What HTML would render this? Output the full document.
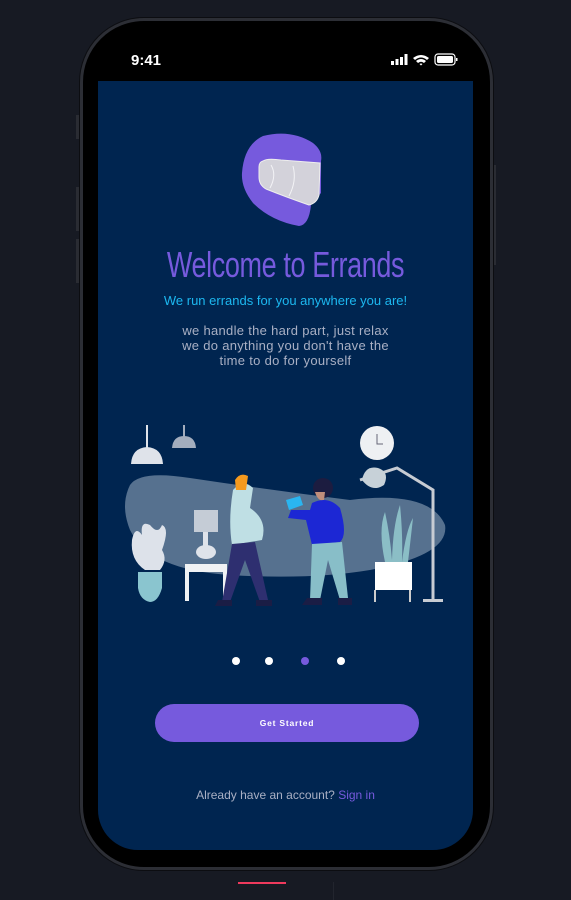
<!DOCTYPE html>
<html><head><meta charset="utf-8"><style>
*{margin:0;padding:0;box-sizing:border-box}
body{width:571px;height:900px;background:#171a23;position:relative;overflow:hidden;font-family:"Liberation Sans",sans-serif}
.phone{position:absolute;left:80px;top:18px;width:413px;height:852px;border-radius:64px;background:#000;border:3px solid #2c2e35;box-shadow:0 0 0 1px #0c0d11}
.inner{position:absolute;left:96px;top:30px;width:380px;height:826px;border-radius:50px;background:#000}
.screen{position:absolute;left:98px;top:81px;width:375px;height:769px;background:#002550;border-radius:0 0 40px 40px;overflow:hidden}
.btn-side{position:absolute;background:#2a2c33;width:3px}
.abs{position:absolute}
</style></head><body>
<div class="btn-side" style="left:76px;top:115px;height:24px"></div>
<div class="btn-side" style="left:76px;top:187px;height:44px"></div>
<div class="btn-side" style="left:76px;top:239px;height:44px"></div>
<div class="btn-side" style="left:493px;top:165px;height:100px"></div>
<div class="phone"></div>
<div class="inner"></div>
<div class="abs" style="left:131px;top:52px;color:#fff;font-size:15px;font-weight:bold">9:41</div>
<svg class="abs" style="left:391px;top:53px" width="68" height="14" viewBox="0 0 68 14">
<rect x="0" y="8" width="3" height="4" fill="#fff"/><rect x="4.5" y="6" width="3" height="6" fill="#fff"/><rect x="9" y="4" width="3" height="8" fill="#fff"/><rect x="13.5" y="1" width="3" height="11" fill="#fff"/>
<path d="M22 5 Q30 -1 38 5 L36 7 Q30 2 24 7Z M25 8 Q30 4 35 8 L33 10 Q30 7.5 27 10Z M28.5 11 L30 12.5 L31.5 11 Q30 10 28.5 11Z" fill="#fff"/>
<rect x="44" y="1" width="20" height="11" rx="3" fill="none" stroke="#fff" stroke-width="1.2"/><rect x="46" y="3" width="16" height="7" rx="1.5" fill="#fff"/><rect x="65" y="5" width="1.5" height="3" fill="#fff"/>
</svg>
<div class="screen">
<svg class="abs" style="left:143px;top:52px" width="82" height="96" viewBox="0 0 82 96">
<path d="M22 3 Q50 -4 72 10 Q82 18 80 28 L80 60 L70 72 Q68 92 58 93 Q30 88 12 70 Q0 55 1 40 Q3 12 22 3Z" fill="#765add"/>
<path d="M22 28 Q26 25 40 27 L79 30 L78 62 Q76 70 68 72 Q45 64 25 56 Q18 52 18 44 L18 34 Q18 29 22 28Z" fill="#d3d2da" stroke="#eee" stroke-width="1"/>
<path d="M30 32 Q36 42 29 55 M52 33 Q56 48 48 63" stroke="#f3f3f6" stroke-width="1" fill="none"/>
</svg>
<div class="abs" style="left:0;width:375px;top:163px;text-align:center;color:#765add;font-size:36px;letter-spacing:-0.5px;transform:scaleX(0.75)">Welcome to Errands</div>
<div class="abs" style="left:0;width:375px;top:212px;text-align:center;color:#1cb8f0;font-size:13px">We run errands for you anywhere you are!</div>
<div class="abs" style="left:0;width:375px;top:242px;text-align:center;color:#a9b0c4;font-size:13px;line-height:15px;letter-spacing:0.3px">we handle the hard part, just relax<br>we do anything you don't have the<br>time to do for yourself</div>
<svg class="abs" style="left:12px;top:329px" width="350" height="210" viewBox="0 0 350 210">
<path d="M20 75 Q30 60 80 68 Q160 80 240 90 Q320 80 335 115 Q340 145 260 160 Q200 170 120 165 Q40 160 20 120 Q10 95 20 75Z" fill="#56718f"/>
<line x1="37" y1="15" x2="37" y2="40" stroke="#dfe3ea" stroke-width="2"/><path d="M21 54 Q22 38 37 37 Q52 38 53 54Z" fill="#dfe3ea"/>
<line x1="74" y1="15" x2="74" y2="27" stroke="#a3adbd" stroke-width="2"/><path d="M62 38 Q63 26 74 26 Q85 26 86 38Z" fill="#a3adbd"/>
<circle cx="267" cy="33" r="17" fill="#eef0f3"/><path d="M267 24 V34 H273" stroke="#667" stroke-width="1" fill="none"/>
<path d="M250 70 L287 58 L323 80 L323 190" stroke="#c7ccd3" stroke-width="3" fill="none"/><rect x="313" y="189" width="20" height="3" fill="#c7ccd3"/>
<path d="M252 70 Q255 55 268 58 Q280 62 274 75 Q262 83 252 70Z" fill="#c7d1d8"/>
<path d="M275 152 Q268 120 275 102 Q280 125 282 150 Q283 115 290 95 Q293 125 292 152 Q296 120 303 108 Q300 135 298 152Z" fill="#8bbec6"/>
<rect x="265" y="152" width="37" height="28" fill="#fff"/><line x1="265" y1="180" x2="265" y2="192" stroke="#ccc" stroke-width="2"/><line x1="300" y1="180" x2="300" y2="192" stroke="#ccc" stroke-width="2"/>
<path d="M35 160 Q20 150 22 130 Q25 115 32 125 Q30 110 40 115 Q48 125 52 115 Q60 118 52 140 Q58 150 50 160Z" fill="#dde2ea"/>
<path d="M28 162 H52 V178 Q48 192 40 192 Q30 190 28 178Z" fill="#8ac5cf"/>
<rect x="84" y="100" width="24" height="22" fill="#c5ccd6"/><ellipse cx="96" cy="142" rx="10" ry="7" fill="#dfe3ea"/><rect x="93" y="122" width="5" height="16" fill="#dfe3ea"/>
<rect x="75" y="154" width="42" height="8" fill="#f0f2f4"/><rect x="75" y="154" width="4" height="37" fill="#f0f2f4"/><rect x="113" y="154" width="4" height="37" fill="#f0f2f4"/>
<path d="M123 80 Q133 68 143 78 L140 98 Q158 110 152 130 L122 135 Q118 110 123 80Z" fill="#bfdfe4"/>
<path d="M125 70 Q130 62 138 66 L136 80 L126 80Z" fill="#f59a1e"/>
<path d="M122 134 L145 132 L158 190 L150 192 L135 150 L120 192 L112 192Z" fill="#2e2f70"/>
<path d="M108 190 H122 V196 H105Z M146 190 H162 V196 H146Z" fill="#1a1d45"/>
<circle cx="213" cy="78" r="10" fill="#1c1c40"/><path d="M205 82 Q208 92 214 90 L215 82Z" fill="#c08e7b"/>
<path d="M202 93 Q218 85 230 98 Q238 125 230 132 L202 135 L196 110 L178 108 L181 100 L200 100Z" fill="#1c27d4"/>
<path d="M202 134 L232 132 L238 188 L230 190 L218 150 L210 190 L200 190Z" fill="#88bec8"/>
<path d="M197 188 H212 V195 H192Z M228 188 H242 V195 H228Z" fill="#1a1d45"/>
<path d="M176 90 L190 86 L193 95 L179 100Z" fill="#2ab5f0"/>
</svg>
<div class="abs" style="left:134px;top:576px;width:8px;height:8px;border-radius:50%;background:#fff"></div>
<div class="abs" style="left:167px;top:576px;width:8px;height:8px;border-radius:50%;background:#fff"></div>
<div class="abs" style="left:203px;top:576px;width:8px;height:8px;border-radius:50%;background:#765add"></div>
<div class="abs" style="left:239px;top:576px;width:8px;height:8px;border-radius:50%;background:#fff"></div>
<div class="abs" style="left:57px;top:623px;width:264px;height:38px;border-radius:19px;background:#765add;color:#fff;text-align:center;line-height:38px;font-size:8.5px;font-weight:bold;letter-spacing:0.8px">Get Started</div>
<div class="abs" style="left:0;width:375px;top:707px;text-align:center;color:#a9b0c4;font-size:12px">Already have an account?<span style="color:#765add"> Sign in</span></div>
</div>
<div class="abs" style="left:238px;top:882px;width:48px;height:2px;background:#ef3a5d"></div>
<div class="abs" style="left:333px;top:882px;width:1px;height:18px;background:#22252e"></div>
</body></html>
